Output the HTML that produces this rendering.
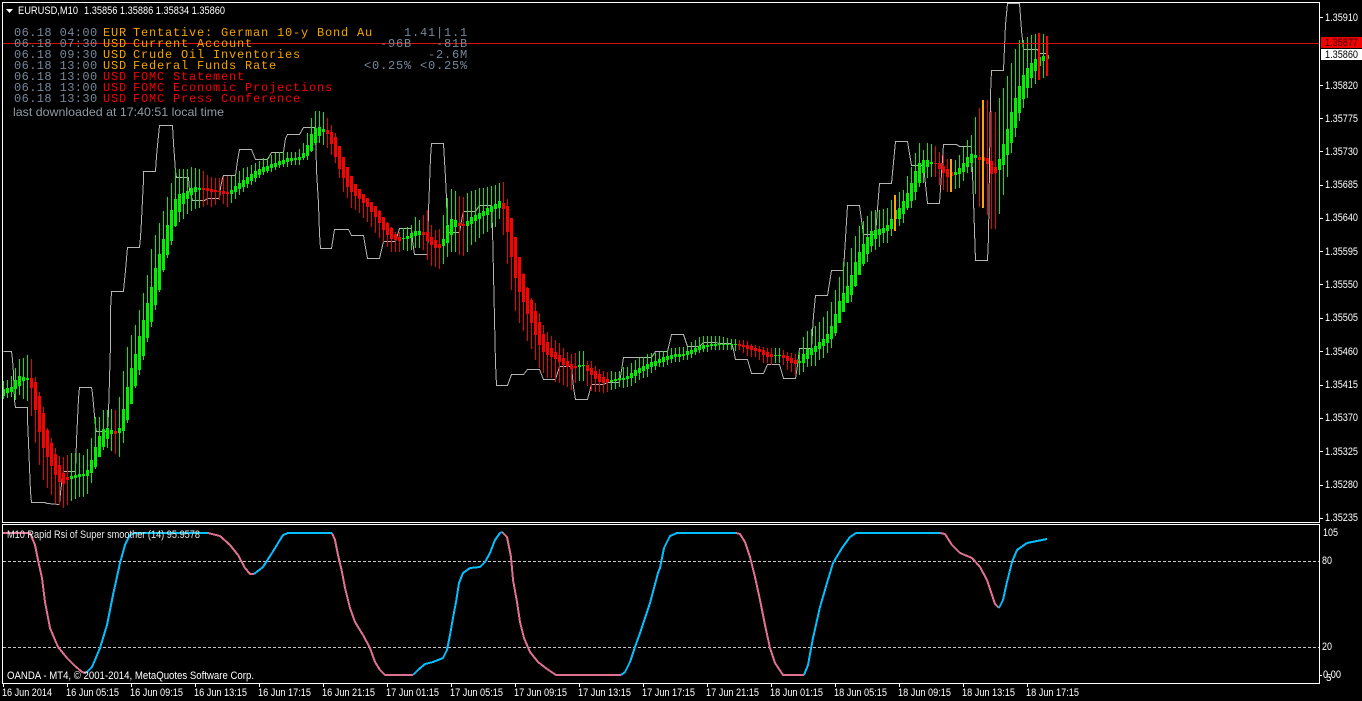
<!DOCTYPE html>
<html><head><meta charset="utf-8"><title>EURUSD,M10</title>
<style>
html,body{margin:0;padding:0;background:#000;width:1362px;height:701px;overflow:hidden}
svg{display:block}
text{font-family:"Liberation Sans",sans-serif;font-size:11px;fill:#fff}
.m text{font-family:"Liberation Mono",monospace;font-size:12px;letter-spacing:.8px}
.t{fill:#76889a}.o{fill:#f4a400}.r{fill:#f80000}
.m text.tm{fill:#76889a;letter-spacing:.4px}
</style></head><body>
<svg xmlns="http://www.w3.org/2000/svg" width="1362" height="701" viewBox="0 0 1362 701">
<rect width="1362" height="701" fill="#000"/>
<clipPath id="c"><rect x="3" y="3" width="1317" height="519"/></clipPath>
<g clip-path="url(#c)" shape-rendering="crispEdges">
<polyline fill="none" stroke="#b4b4b4" stroke-width="1" transform="translate(.5 .5)" points="3,351 11,351 12,359 13,373 14,400 15,407 27,407 27,419 28,442 29,467 30,491 31,502 44,502 47,503 59,504 60,492 61,484 62,476 63,471 75,471 76,440 77,419 78,398 79,387 91,387 92,393 93,404 94,415 95,426 96,431 107,431 108,412 109,379 110,344 110,309 111,291 123,291 124,280 125,270 126,258 127,247 139,247 140,237 141,220 142,199 143,180 143,171 155,171 156,156 157,145 158,135 159,125 172,125 173,143 174,156 175,171 176,177 188,177 189,190 192,200 204,200 207,198 219,198 220,187 222,178 223,175 235,175 237,160 239,149 251,149 255,159 267,159 271,152 283,152 285,138 287,134 299,134 303,127 315,127 316,170 318,203 319,233 320,248 331,248 334,229 348,229 351,235 363,235 365,247 367,258 379,258 383,241 395,241 399,228 411,228 412,240 414,254 427,254 428,210 429,185 430,157 431,143 443,143 445,177 446,198 447,232 459,232 461,220 463,211 475,211 479,205 491,205 492,228 493,273 494,318 495,363 496,385 507,385 511,374 523,374 527,369 539,369 543,379 555,379 559,366 571,366 573,387 575,399 587,399 591,384 603,384 607,382 619,382 621,370 623,357 651,357 655,351 667,351 671,334 683,334 687,346 699,346 703,342 715,342 719,343 731,343 733,349 735,359 747,359 751,373 763,373 767,364 779,364 783,378 795,378 797,365 799,348 811,348 813,315 815,295 827,295 831,270 843,270 847,205 859,205 863,234 875,234 879,183 891,183 895,141 907,141 911,165 923,165 927,203 939,203 943,144 956,144 959,146 971,146 973,200 975,260 987,260 988,237 990,94 991,70 1003,70 1005,24 1007,3 1019,3 1021,30 1023,49 1037,49 1039,53 1047,53"/>
<path id="gw" fill="#00f000"/><path id="rw" fill="#f00000"/>
<path id="gb" fill="#00f000"/><path id="rb" fill="#ff0000"/>
<path fill="#ffa500" d="M894 195h2v36h-2zM950 159h2v33h-2zM982 100h2v108h-2z"/>
<path fill="#ff0000" d="M1038 33h2v47h-2zM1046 36h2v40h-2z"/>
<rect x="3" y="43" width="1317" height="1" fill="#d81010"/>
</g>
<g fill="#fff" shape-rendering="crispEdges">
<rect x="2" y="2" width="1318" height="1"/><rect x="2" y="2" width="1" height="520"/><rect x="1319" y="2" width="1" height="521"/><rect x="2" y="522" width="1318" height="1"/>
<rect x="2" y="524" width="1318" height="1"/><rect x="2" y="524" width="1" height="160"/><rect x="1319" y="524" width="1" height="160"/><rect x="2" y="683" width="1318" height="1"/>
<path d="M1320 17h3v1h-3zM1320 85h3v1h-3zM1320 118h3v1h-3zM1320 151h3v1h-3zM1320 185h3v1h-3zM1320 218h3v1h-3zM1320 251h3v1h-3zM1320 284h3v1h-3zM1320 318h3v1h-3zM1320 351h3v1h-3zM1320 385h3v1h-3zM1320 418h3v1h-3zM1320 451h3v1h-3zM1320 485h3v1h-3zM1320 518h3v1h-3zM1320 675h2v1h-2z"/>
<path d="M3 684h1v3h-1zM67 684h1v3h-1zM131 684h1v3h-1zM195 684h1v3h-1zM259 684h1v3h-1zM323 684h1v3h-1zM387 684h1v3h-1zM451 684h1v3h-1zM515 684h1v3h-1zM579 684h1v3h-1zM643 684h1v3h-1zM707 684h1v3h-1zM771 684h1v3h-1zM835 684h1v3h-1zM899 684h1v3h-1zM963 684h1v3h-1zM1027 684h1v3h-1z"/>
</g>
<path d="M6 9h7l-3.5 4z" fill="#fff"/>
<text x="18" y="14" textLength="60">EURUSD,M10</text>
<text x="84" y="14" textLength="141">1.35856 1.35886 1.35834 1.35860</text>
<g class="m">
<text x="14" y="36" class="tm">06.18 04:00</text><text x="103" y="36" class="o">EUR</text><text x="133" y="36" class="o">Tentative: German 10-y Bond Au</text><text x="404" y="36" class="t">1.41|1.1</text>
<text x="14" y="47" class="tm">06.18 07:30</text><text x="103" y="47" class="o">USD</text><text x="133" y="47" class="o">Current Account</text><text x="380" y="47" class="t">-96B</text><text x="436" y="47" class="t">-81B</text>
<text x="14" y="58" class="tm">06.18 09:30</text><text x="103" y="58" class="o">USD</text><text x="133" y="58" class="o">Crude Oil Inventories</text><text x="428" y="58" class="t">-2.6M</text>
<text x="14" y="69" class="tm">06.18 13:00</text><text x="103" y="69" class="o">USD</text><text x="133" y="69" class="o">Federal Funds Rate</text><text x="364" y="69" class="t">&lt;0.25% &lt;0.25%</text>
<text x="14" y="80" class="tm">06.18 13:00</text><text x="103" y="80" class="r">USD</text><text x="133" y="80" class="r">FOMC Statement</text>
<text x="14" y="91" class="tm">06.18 13:00</text><text x="103" y="91" class="r">USD</text><text x="133" y="91" class="r">FOMC Economic Projections</text>
<text x="14" y="102" class="tm">06.18 13:30</text><text x="103" y="102" class="r">USD</text><text x="133" y="102" class="r">FOMC Press Conference</text>
</g>
<text x="13" y="116" textLength="211" style="font-size:12px;fill:#909aa4">last downloaded at 17:40:51 local time</text>
<text x="1325" y="21" textLength="33">1.35910</text><text x="1325" y="89" textLength="33">1.35820</text><text x="1325" y="122" textLength="33">1.35775</text><text x="1325" y="155" textLength="33">1.35730</text><text x="1325" y="188" textLength="33">1.35685</text><text x="1325" y="221" textLength="33">1.35640</text><text x="1325" y="255" textLength="33">1.35595</text><text x="1325" y="288" textLength="33">1.35550</text><text x="1325" y="321" textLength="33">1.35505</text><text x="1325" y="355" textLength="33">1.35460</text><text x="1325" y="388" textLength="33">1.35415</text><text x="1325" y="421" textLength="33">1.35370</text><text x="1325" y="455" textLength="33">1.35325</text><text x="1325" y="488" textLength="33">1.35280</text><text x="1325" y="521" textLength="33">1.35235</text>
<rect x="1321" y="37" width="41" height="11" fill="#f00000" shape-rendering="crispEdges"/><text x="1325" y="46" textLength="33" style="fill:#300">1.35877</text>
<rect x="1321" y="49" width="41" height="11" fill="#fff" shape-rendering="crispEdges"/><text x="1325" y="58" textLength="33" style="fill:#000">1.35860</text>
<!-- RSI -->
<g shape-rendering="crispEdges" fill="none">
<path d="M3 561.5H1319M3 647.5H1319" stroke="#c8c8c8" stroke-width="1" stroke-dasharray="3 2"/>
<g stroke="#e0708f" stroke-width="2">
<polyline points="3,533 30,533 35,545 38,560 42,578 45,602 50,628 58,647 67,658 75,666 82,672 86,673"/>
<polyline points="208,533 220,536 230,545 238,555 245,568 250,574 254,574"/>
<polyline points="332,533 335,540 338,555 342,572 345,588 350,608 355,622 363,635 370,648 375,662 380,670 385,675 413,675"/>
<polyline points="502,532 507,537 511,557 513,580 517,602 520,622 524,638 530,652 538,662 547,669 556,675 621,675"/>
<polyline points="736,533 740,534 745,542 750,557 755,577 760,600 765,625 770,648 775,663 783,675 804,675"/>
<polyline points="940,533 945,534 952,545 960,553 972,558 980,567 987,580 995,604 999,608"/>
</g>
<g stroke="#00bfff" stroke-width="2">
<polyline points="86,673 92,667 100,648 107,625 113,595 120,563 125,545 130,535 135,533 208,533"/>
<polyline points="254,574 263,567 272,553 283,535 288,533 332,533"/>
<polyline points="413,675 418,670 425,664 433,662 443,658 447,650 450,635 453,618 456,602 459,583 463,573 470,568 480,567 485,562 490,553 495,540 500,533 502,532"/>
<polyline points="621,675 625,672 630,662 635,647 640,633 650,603 658,573 660,568 664,548 670,536 677,533 736,533"/>
<polyline points="804,675 808,665 813,638 820,607 827,583 833,563 842,548 850,537 856,533 940,533"/>
<polyline points="999,608 1003,600 1007,582 1012,562 1017,550 1027,543 1037,541 1047,539"/>
</g>
</g>
<text x="7" y="538" textLength="193" style="fill:#e8e8e8">M10 Rapid Rsi of Super smoother (14) 95.9578</text>
<text x="7" y="679" textLength="247">OANDA - MT4, © 2001-2014, MetaQuotes Software Corp.</text>
<text x="1323" y="536" textLength="15">105</text><text x="1322" y="564" textLength="10">80</text><text x="1322" y="650" textLength="10">20</text><text x="1323" y="678" textLength="18">0.00</text><text x="1326" y="681" style="font-size:10px">5</text>
<text x="2" y="696" textLength="50">16 Jun 2014</text><text x="66" y="696" textLength="53">16 Jun 05:15</text><text x="130" y="696" textLength="53">16 Jun 09:15</text><text x="194" y="696" textLength="53">16 Jun 13:15</text><text x="258" y="696" textLength="53">16 Jun 17:15</text><text x="322" y="696" textLength="53">16 Jun 21:15</text><text x="386" y="696" textLength="53">17 Jun 01:15</text><text x="450" y="696" textLength="53">17 Jun 05:15</text><text x="514" y="696" textLength="53">17 Jun 09:15</text><text x="578" y="696" textLength="53">17 Jun 13:15</text><text x="642" y="696" textLength="53">17 Jun 17:15</text><text x="706" y="696" textLength="53">17 Jun 21:15</text><text x="770" y="696" textLength="53">18 Jun 01:15</text><text x="834" y="696" textLength="53">18 Jun 05:15</text><text x="898" y="696" textLength="53">18 Jun 09:15</text><text x="962" y="696" textLength="53">18 Jun 13:15</text><text x="1026" y="696" textLength="53">18 Jun 17:15</text>
</svg>
<script>
var d="3,389,396,381,399 7,388,393,380,398 11,387,392,376,397 15,380,389,368,400 19,376,386,359,395 23,377,381,358,399 27,378,380,355,401 31,378,388,359,416 35,382,410,377,443 39,396,432,392,465 43,413,448,407,480 47,430,457,428,488 51,443,466,438,495 55,454,475,448,503 59,465,482,456,505 63,473,484,457,508 67,477,480,455,505 71,476,479,453,501 75,475,478,453,499 79,474,477,453,497 83,474,476,455,497 87,470,476,449,494 91,460,473,438,483 95,447,467,417,469 99,436,457,417,457 103,429,447,410,450 107,428,439,410,448 111,430,434,409,451 115,431,434,410,454 119,428,433,397,457 123,409,431,371,443 127,387,420,347,423 131,368,404,335,404 135,354,386,325,388 139,336,370,310,375 143,320,356,293,360 147,303,338,275,342 151,287,322,249,327 155,268,305,235,310 159,254,290,223,292 163,239,270,211,272 167,225,255,197,258 171,210,241,183,245 175,199,226,169,227 179,194,212,169,222 183,193,204,169,219 187,191,199,169,214 191,188,195,167,211 195,187,192,168,209 199,188,190,169,208 203,188,190,171,207 207,188,191,175,205 211,189,192,177,207 215,190,192,178,205 219,191,192,178,200 223,191,194,177,204 227,192,194,176,207 231,190,194,176,203 235,186,192,175,199 239,183,189,171,195 243,180,187,168,192 247,177,184,167,188 251,174,181,165,185 255,171,178,163,182 259,169,175,161,178 263,167,172,158,175 267,166,171,158,173 271,164,168,155,172 275,163,167,153,170 279,161,165,152,168 283,160,164,152,167 287,158,162,152,167 291,158,161,152,165 295,158,160,152,165 299,157,160,149,165 303,153,158,143,160 307,145,156,133,160 311,134,151,118,152 315,128,143,111,145 319,127,136,111,143 323,129,132,112,145 327,130,134,118,148 331,132,144,125,155 335,137,157,133,163 339,146,169,147,178 343,157,178,158,192 347,167,187,169,198 351,176,192,181,208 355,184,196,187,210 359,189,199,190,213 363,194,203,195,218 367,198,207,198,222 371,202,212,205,227 375,206,217,207,233 379,211,223,210,238 383,217,230,217,242 387,223,235,222,247 391,228,239,227,252 395,234,240,232,252 399,237,241,232,252 403,238,239,228,250 407,236,239,227,251 411,233,238,225,250 415,231,236,217,248 419,231,235,220,248 423,232,235,215,250 427,232,241,210,260 431,237,245,225,266 435,240,248,230,267 439,244,248,229,269 443,239,246,215,264 447,225,243,198,257 451,219,235,189,252 455,220,227,191,252 459,223,226,196,255 463,224,226,197,256 467,221,226,193,252 471,217,224,191,245 475,215,221,190,242 479,213,219,188,238 483,211,216,188,234 487,208,215,187,232 491,206,212,186,228 495,204,209,185,227 499,201,208,183,219 503,203,209,182,235 507,206,232,199,264 511,218,257,218,290 515,237,278,237,311 519,257,292,257,323 523,274,302,273,331 527,288,314,287,341 531,300,323,298,349 535,311,335,303,360 539,322,345,313,368 543,334,352,325,373 547,342,355,332,378 551,348,357,336,378 555,352,359,340,382 559,355,362,343,383 563,358,365,348,385 567,361,367,352,387 571,364,369,354,390 575,366,368,353,383 579,365,367,351,381 583,365,366,351,381 587,365,371,361,386 591,368,375,361,391 595,371,379,366,392 599,374,382,369,392 603,377,383,371,393 607,379,382,372,392 611,380,382,371,390 615,379,381,372,389 619,378,380,371,387 623,378,380,367,388 627,376,379,367,387 631,373,378,363,386 635,370,376,360,383 639,368,373,358,380 643,366,371,357,378 647,364,369,354,377 651,362,367,353,373 655,361,366,353,370 659,359,363,352,367 663,357,362,351,367 667,356,360,350,365 671,355,359,348,363 675,354,357,348,362 679,354,357,347,362 683,354,356,347,360 687,351,355,347,360 691,350,354,342,358 695,348,352,340,355 699,346,350,337,353 703,345,349,336,352 707,345,347,336,352 711,344,346,336,350 715,344,346,336,350 719,344,345,336,350 723,344,345,337,350 727,344,345,338,350 731,344,345,339,350 735,344,345,339,351 739,344,346,340,350 743,345,347,340,353 747,345,349,341,356 751,346,350,344,357 755,348,351,345,357 759,349,352,346,360 763,350,355,347,363 767,352,357,348,363 771,354,357,348,365 775,355,356,348,363 779,355,356,348,363 783,355,358,350,365 787,356,361,352,370 791,358,363,353,372 795,360,364,354,375 799,361,363,352,375 803,354,363,337,372 807,349,359,331,367 811,348,355,329,366 815,346,352,326,366 819,342,349,322,360 823,339,346,317,358 827,334,343,311,353 831,326,339,302,348 835,314,333,290,336 839,301,323,277,323 843,293,312,262,310 847,286,303,262,302 851,275,295,248,302 855,262,286,236,287 859,252,275,226,273 863,244,264,221,266 867,237,254,216,262 871,231,246,211,252 875,230,239,210,250 879,229,235,210,247 883,228,233,209,243 887,225,231,208,243 891,219,229,200,236 895,210,219,195,231 899,208,219,192,226 903,201,214,190,223 907,193,208,176,210 911,183,201,167,208 915,171,192,153,200 919,163,183,143,187 923,160,173,150,183 927,160,167,143,178 931,162,164,144,177 935,163,164,146,177 939,163,169,152,185 943,166,173,155,190 947,169,177,159,192 951,172,176,159,192 955,172,175,160,189 959,168,174,155,188 963,163,172,147,181 967,157,167,140,173 971,154,163,135,172 975,155,158,117,194 979,157,160,108,207 983,157,161,100,208 987,158,164,100,215 991,161,174,111,229 995,167,173,112,229 999,159,170,98,214 1003,144,165,88,195 1007,129,155,76,177 1011,112,143,63,153 1015,98,128,49,137 1019,86,113,40,121 1023,75,99,40,108 1027,68,88,37,98 1031,63,78,35,88 1035,59,71,34,84 1039,57,66,34,80 1043,56,61,34,78 1047,55,59,36,76";
var R=[[31,67],[115,115],[203,227],[327,399],[423,439],[459,463],[503,575],[587,607],[739,771],[783,795],[935,951],[979,995]];
var p={gw:"",rw:"",gb:"",rb:""};
d.split(" ").forEach(function(s){var a=s.split(",").map(Number),x=a[0],red=R.some(function(r){return x>=r[0]&&x<=r[1]});
var h=Math.max(a[2]-a[1],1),w=Math.max(a[4]-a[3],1);
p[red?"rw":"gw"]+="M"+x+" "+a[3]+"h1v"+w+"h-1z";
p[red?"rb":"gb"]+="M"+(x-1)+" "+a[1]+"h3v"+h+"h-3z";});
for(var k in p)document.getElementById(k).setAttribute("d",p[k]);
var t=document.querySelectorAll("text[textLength]");
for(var i=0;i<t.length;i++)t[i].setAttribute("lengthAdjust","spacingAndGlyphs");
</script>
</body></html>
